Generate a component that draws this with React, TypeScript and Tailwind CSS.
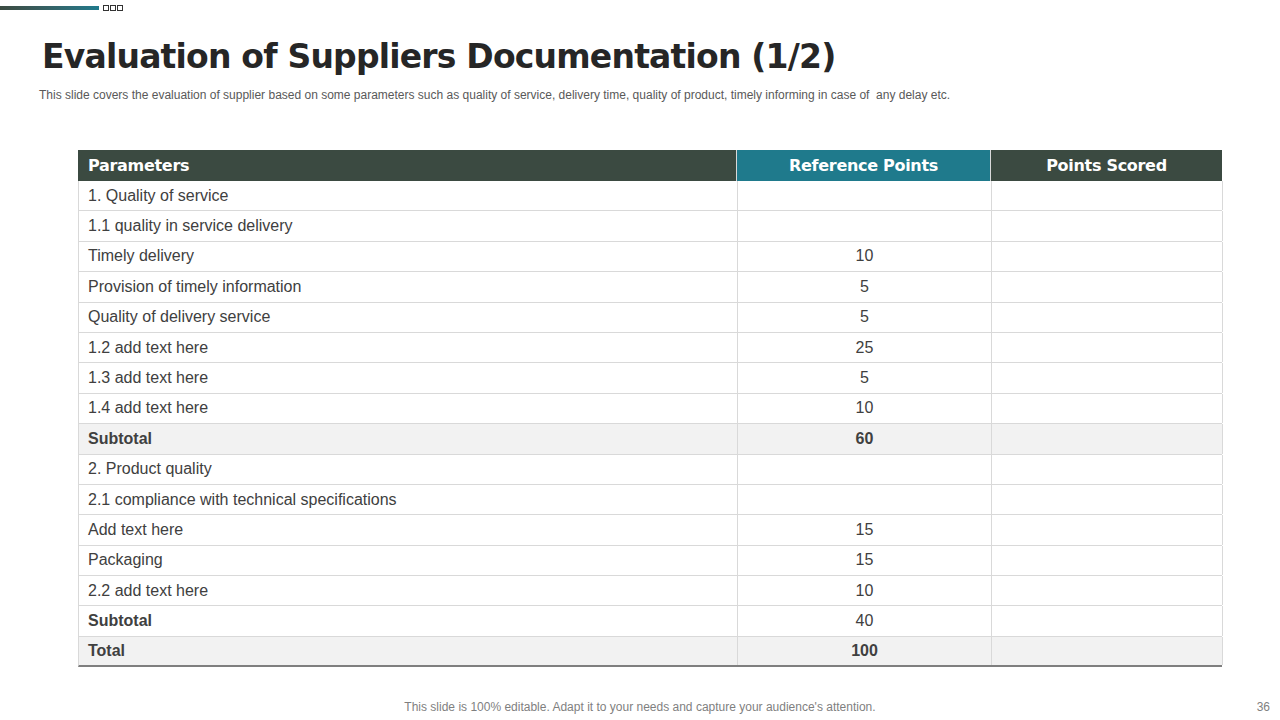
import React from "react";

type Row = {
  label: string;
  points?: string;
  kind?: "normal" | "subtotal" | "subtotalWhite" | "total";
};

const rows: Row[] = [
  { label: "1. Quality  of service" },
  { label: "1.1 quality  in service delivery" },
  { label: "Timely  delivery", points: "10" },
  { label: "Provision of timely information", points: "5" },
  { label: "Quality  of delivery service", points: "5" },
  { label: "1.2 add text here", points: "25" },
  { label: "1.3 add text here", points: "5" },
  { label: "1.4 add text here", points: "10" },
  { label: "Subtotal", points: "60", kind: "subtotal" },
  { label: "2. Product quality" },
  { label: "2.1 compliance with technical specifications" },
  { label: "Add text here", points: "15" },
  { label: "Packaging", points: "15" },
  { label: "2.2 add text here", points: "10" },
  { label: "Subtotal", points: "40", kind: "subtotalWhite" },
  { label: "Total", points: "100", kind: "total" },
];

const arial = { fontFamily: '"Liberation Sans", Arial, sans-serif' };
const gothic = { fontFamily: '"DejaVu Sans", "Liberation Sans", sans-serif' };

export default function App() {
  return (
    <div className="relative w-[1280px] h-[720px] bg-white overflow-hidden" style={arial}>
      {/* top bar */}
      <div className="flex items-center gap-[1px] pt-[5px]">
        <div className="w-[99px] h-[4px] bg-gradient-to-r from-[#3b4a41] to-[#1f7a8c]" />
        <div className="ml-[3px] w-[6px] h-[6px] border border-[#333]" />
        <div className="w-[6px] h-[6px] border border-[#333]" />
        <div className="w-[6px] h-[6px] border border-[#333]" />
      </div>

      <h1
        className="ml-[42px] mt-[24px] text-[33px] font-bold text-[#262626] leading-[44px] tracking-[-0.8px]"
        style={gothic}
      >
        Evaluation of Suppliers Documentation (1/2)
      </h1>
      <p className="ml-[39px] mt-[9px] text-[12px] text-[#595959] leading-[14px]">
        This slide covers the evaluation of supplier based on some parameters such as quality of service, delivery
        time, quality of product, timely informing in case of &nbsp;any delay etc.
      </p>

      <div className="ml-[78px] mt-[48px] w-[1144px]">
        <div
          className="grid grid-cols-[658px_254px_232px] h-[31px] text-white text-[16px] font-bold tracking-[-0.3px]"
          style={gothic}
        >
          <div className="bg-[#3b4a41] flex items-center pl-[10px]">Parameters</div>
          <div className="bg-[#1f7a8c] flex items-center justify-center border-l border-[#d9d9d9]">
            Reference Points
          </div>
          <div className="bg-[#3b4a41] flex items-center justify-center border-l border-[#d9d9d9]">
            Points Scored
          </div>
        </div>
        {rows.map((r, i) => {
          const bold = r.kind && r.kind !== "normal";
          const grey = r.kind === "subtotal" || r.kind === "total";
          const last = r.kind === "total";
          return (
            <div
              key={i}
              className={
                "grid grid-cols-[658px_254px_232px] h-[30.4px] text-[16px] text-[#404040] border-l border-[#d9d9d9] " +
                (grey ? "bg-[#f2f2f2] " : "bg-white ") +
                (last ? "border-b-2 border-b-[#7f7f7f]" : "border-b border-b-[#d9d9d9]")
              }
            >
              <div className={"flex items-center pl-[9px] " + (bold ? "font-bold" : "")}>{r.label}</div>
              <div
                className={
                  "flex items-center justify-center border-l border-[#d9d9d9] " + (grey ? "font-bold" : "")
                }
              >
                {r.points}
              </div>
              <div className="border-l border-r border-[#d9d9d9]" />
            </div>
          );
        })}
      </div>

      <div className="absolute left-0 right-0 top-[698px] text-center text-[12px] text-[#7f7f7f]">
        This slide is 100% editable. Adapt it to your needs and capture your audience's attention.
      </div>
      <div className="absolute right-[10px] top-[698px] text-[12px] text-[#7f7f7f]">36</div>
    </div>
  );
}
